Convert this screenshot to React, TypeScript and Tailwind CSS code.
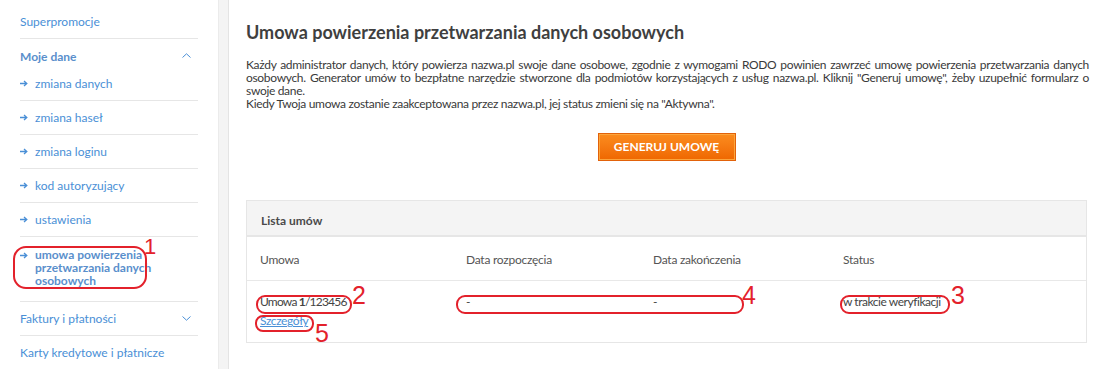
import React from "react";

const Arrow = () => (
  <svg width="8" height="7" viewBox="0 0 8 7" className="shrink-0">
    <path d="M0 3.5H6.5M4 1L6.8 3.5L4 6" stroke="#4a8fd6" strokeWidth="1.3" fill="none" />
  </svg>
);

const Chevron = ({ up }: { up?: boolean }) => (
  <svg width="9" height="5" viewBox="0 0 9 5" className="mr-[7px]">
    <path d={up ? "M0.5 4.5L4.5 0.8L8.5 4.5" : "M0.5 0.5L4.5 4.2L8.5 0.5"} stroke="#4a8fd6" strokeWidth="1" fill="none" />
  </svg>
);

const subItems = ["zmiana danych", "zmiana haseł", "zmiana loginu", "kod autoryzujący", "ustawienia"];

const Oval = ({ l, t, w, h, r = 9 }: { l: number; t: number; w: number; h: number; r?: number }) => (
  <div
    className="absolute border-2 border-[#e3212b] pointer-events-none"
    style={{ left: l, top: t, width: w, height: h, borderRadius: r }}
  />
);

const Num = ({ l, t, n, s = 25 }: { l: number; t: number; n: string; s?: number }) => (
  <div
    className="absolute text-[#e3212b] leading-none font-['Liberation_Sans',sans-serif]"
    style={{ left: l, top: t, fontSize: s }}
  >
    {n}
  </div>
);

export default function App() {
  return (
    <div className="relative flex w-[1104px] h-[369px] overflow-hidden bg-white font-['Lato',sans-serif]">
      {/* Sidebar */}
      <div className="w-[218px] shrink-0 bg-white pt-[5px] px-[20px] text-[12px] text-[#4a8fd6]">
        <div className="h-[34px] flex items-center border-b border-[#e6e6e6]">Superpromocje</div>
        <div className="h-[28px] pt-[11px] flex items-start justify-between font-bold text-[#5a8fcc]">
          <span className="leading-[14px]">Moje dane</span>
          <span className="mt-[3px]"><Chevron up /></span>
        </div>
        {subItems.map((s) => (
          <div key={s} className="h-[34px] flex items-center gap-[7px] border-b border-[#e6e6e6]">
            <Arrow />
            <span>{s}</span>
          </div>
        ))}
        <div className="h-[65px] flex items-start gap-[7px] pt-[11px] border-b border-[#e6e6e6]">
          <span className="mt-[4px]"><Arrow /></span>
          <span className="font-bold leading-[13px] text-[#5a8fcc]">
            umowa powierzenia
            <br />
            przetwarzania danych
            <br />
            osobowych
          </span>
        </div>
        <div className="h-[34px] flex items-center justify-between border-b border-[#e6e6e6]">
          <span>Faktury i płatności</span>
          <Chevron />
        </div>
        <div className="h-[34px] flex items-center">Karty kredytowe i płatnicze</div>
      </div>

      {/* grey strip */}
      <div className="w-[11px] shrink-0 bg-[#f4f4f4] border-l border-[#ebebeb] border-r border-r-[#e4e4e4]" />

      {/* Main */}
      <div className="flex-1 pl-[17px] pr-[14px] pt-[20px] text-[#444]">
        <h1 className="text-[18px] leading-[24px] font-bold text-[#3f3f3f]">
          Umowa powierzenia przetwarzania danych osobowych
        </h1>
        <div className="mt-[14px] text-[12px] leading-[13px] tracking-[-0.32px] text-[#3a3a3a] w-[843px]">
          <div className="whitespace-nowrap [text-align-last:justify]">
            Każdy administrator danych, który powierza nazwa.pl swoje dane osobowe, zgodnie z wymogami RODO powinien zawrzeć umowę powierzenia przetwarzania danych
          </div>
          <div className="whitespace-nowrap [text-align-last:justify]">
            osobowych. Generator umów to bezpłatne narzędzie stworzone dla podmiotów korzystających z usług nazwa.pl. Kliknij "Generuj umowę", żeby uzupełnić formularz o
          </div>
          <div>swoje dane.</div>
          <div>Kiedy Twoja umowa zostanie zaakceptowana przez nazwa.pl, jej status zmieni się na "Aktywna".</div>
        </div>
        <div className="flex justify-center mt-[23px] pr-[3px]">
          <button className="w-[138px] h-[28px] border border-[#e2620a] bg-gradient-to-b from-[#fb8c1e] to-[#ef6700] shadow-[inset_0_0_0_1px_#fca53c] text-white font-bold text-[12px]">
            GENERUJ UMOWĘ
          </button>
        </div>

        {/* Panel */}
        <div className="mt-[39px] w-[841px] border border-[#e6e6e6] text-[12px] tracking-[-0.25px] text-[#555]">
          <div className="h-[36px] pt-[5px] bg-[#f4f4f4] border-b-2 border-[#e6e6e6] flex items-center pl-[14px] font-bold tracking-normal text-[#4a4a4a]">
            Lista umów
          </div>
          <div className="grid grid-cols-[206px_187px_190px_1fr] pl-[13px] h-[44px] pt-[2px] items-center border-b border-[#e8e8e8]">
            <div>Umowa</div>
            <div>Data rozpoczęcia</div>
            <div>Data zakończenia</div>
            <div>Status</div>
          </div>
          <div className="grid grid-cols-[206px_187px_190px_1fr] pl-[13px] h-[61px] pt-[14px] text-[#444]">
            <div className="leading-[14px]">
              <div className="tracking-[-0.8px]">
                Umowa <span className="font-bold">1</span>/123456
              </div>
              <div className="mt-[5px] text-[#4a8fd6] underline tracking-[-0.4px]">Szczegóły</div>
            </div>
            <div className="leading-[14px]">-</div>
            <div className="leading-[14px]">-</div>
            <div className="leading-[14px] tracking-[-0.45px]">w trakcie weryfikacji</div>
          </div>
        </div>
      </div>

      {/* Annotations */}
      <Oval l={13} t={246} w={134} h={43} r={13} />
      <Num l={144} t={236} n="1" s={22} />
      <Oval l={256} t={295} w={96} h={19} />
      <Num l={352} t={283} n="2" />
      <Oval l={255} t={315} w={59} h={17} r={8} />
      <Num l={315} t={321} n="5" />
      <Oval l={456} t={295} w={288} h={19} />
      <Num l={742} t={283} n="4" />
      <Oval l={840} t={295} w={110} h={19} />
      <Num l={951} t={283} n="3" />
    </div>
  );
}
